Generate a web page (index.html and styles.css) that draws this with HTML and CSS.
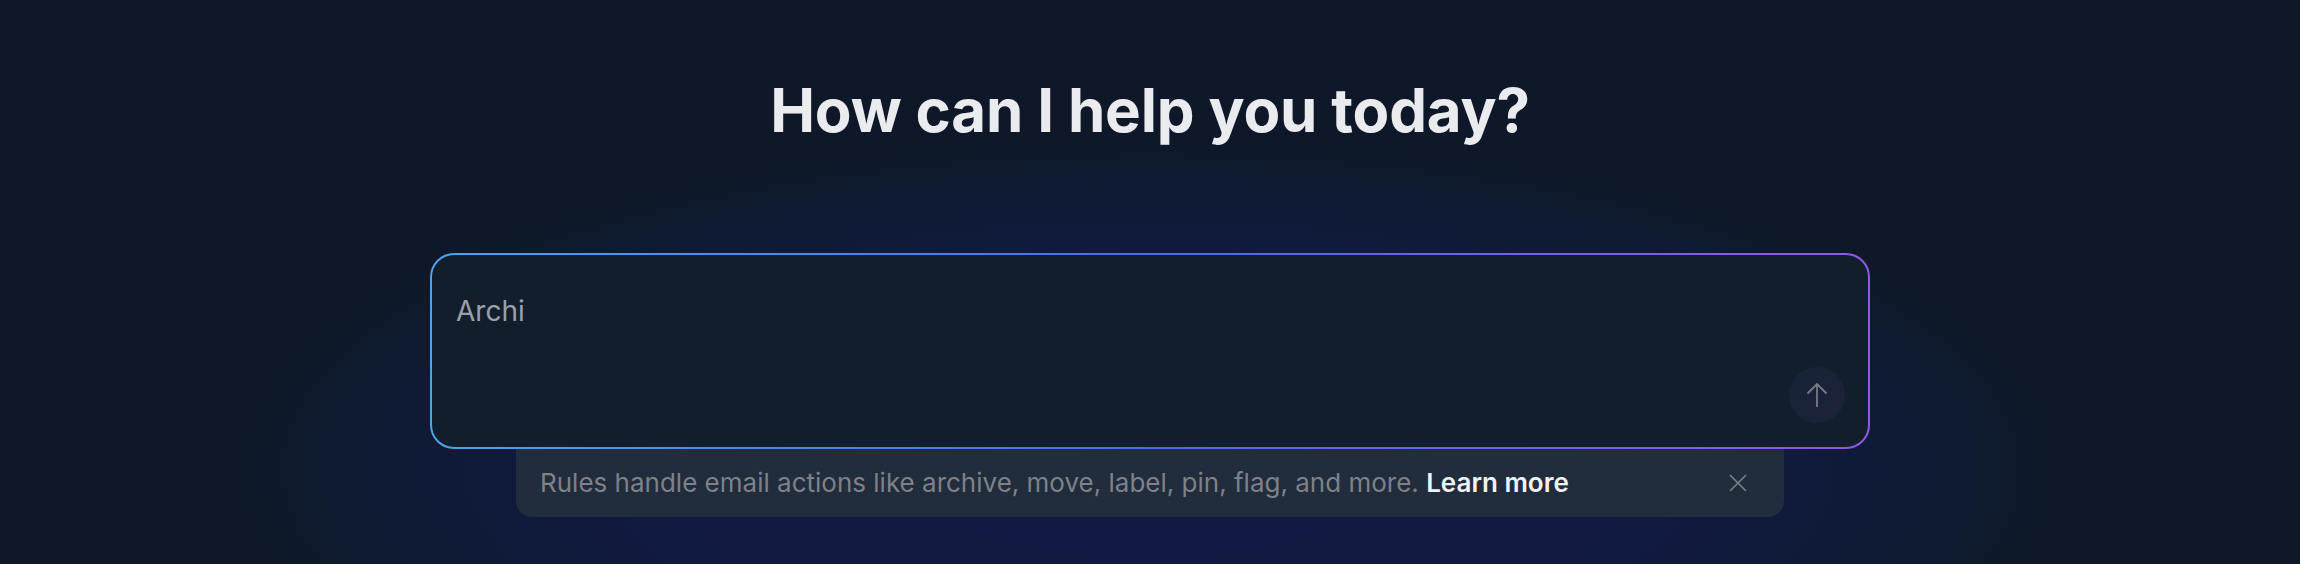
FILE: index.html
```html
<!DOCTYPE html>
<html lang="en">
<head>
<meta charset="utf-8">
<title>How can I help you today?</title>
<link rel="stylesheet" href="styles.css">
</head>
<body>
<main class="page">
  <div class="glow"></div>
  <h1 class="title">How can I help you today?</h1>
  <section class="composer">
    <div class="box">
      <div class="box-inner">
        <p class="input">Archi</p>
        <div class="actions">
          <button class="send" aria-label="Send">
            <svg width="28" height="28" viewBox="0 0 28 28" fill="none" stroke="currentColor" stroke-width="1.8"><path d="M14 26V3.500M4.500 12.500 14 3 23.500 12.500"/></svg>
          </button>
        </div>
      </div>
    </div>
    <div class="tip">
      <p class="tip-text">Rules handle email actions like archive, move, label, pin, flag, and more. <a class="tip-link">Learn more</a></p>
      <button class="close" aria-label="Close">
        <svg width="18" height="18" viewBox="0 0 18 18" fill="none" stroke="currentColor" stroke-width="1.6"><path d="M1 1 17 17M17 1 1 17"/></svg>
      </button>
    </div>
  </section>
</main>
</body>
</html>
```
FILE: styles.css
```css
* { box-sizing: border-box; }
html, body { margin: 0; height: 100%; background: #0e1727; }
body { font-family: Inter, "Liberation Sans", sans-serif; overflow: hidden; }
.page {
  position: relative;
  height: 564px;
  padding-top: 72px;
  display: flex;
  flex-direction: column;
  align-items: center;
  background: #0e1828;
  overflow: hidden;
}
.glow {
  position: absolute;
  left: 240px;
  top: 140px;
  width: 1820px;
  height: 660px;
  background: radial-gradient(closest-side, #121a44 0%, #121a42 50%, #101a3a 72%, #0e1a30 90%, rgba(14, 24, 40, 0) 100%);
}
.title {
  position: relative;
  margin: 0;
  font-size: 60px;
  line-height: 76px;
  font-weight: 700;
  color: #e9ebee;
  letter-spacing: -0.16px;
}
.composer {
  position: relative;
  margin-top: 105px;
  width: 1440px;
  display: flex;
  flex-direction: column;
  align-items: center;
}
.box {
  width: 100%;
  height: 196px;
  padding: 2px;
  border-radius: 24px;
  background: linear-gradient(90deg, #4fa3e8 0%, #4a6ce8 50%, #9057ea 100%);
  position: relative;
  z-index: 1;
}
.box-inner {
  height: 100%;
  border-radius: 22px;
  background: #121e2c;
  padding: 38px 24px 24px;
  display: flex;
  flex-direction: column;
  justify-content: space-between;
}
.input {
  margin: 0;
  font-size: 28px;
  line-height: 36px;
  color: #9aa0ab;
}
.actions { display: flex; justify-content: flex-end; margin-right: -1px; }
.send {
  width: 56px;
  height: 56px;
  border: 0;
  padding: 0;
  border-radius: 50%;
  background: linear-gradient(135deg, #152338, #1e2239);
  color: #777b85;
  display: flex;
  align-items: center;
  justify-content: center;
}
.tip {
  width: 1268px;
  height: 68px;
  padding: 0 37px 0 24px;
  background: #212c3c;
  border-radius: 0 0 16px 16px;
  display: flex;
  align-items: center;
  justify-content: space-between;
}
.tip-text {
  margin: 0;
  font-size: 26px;
  line-height: 36px;
  color: #7e8188;
}
.tip-link { color: #f2f3f4; font-weight: 600; }
.close {
  border: 0;
  padding: 0;
  background: none;
  color: #7e8188;
  display: flex;
}
```
